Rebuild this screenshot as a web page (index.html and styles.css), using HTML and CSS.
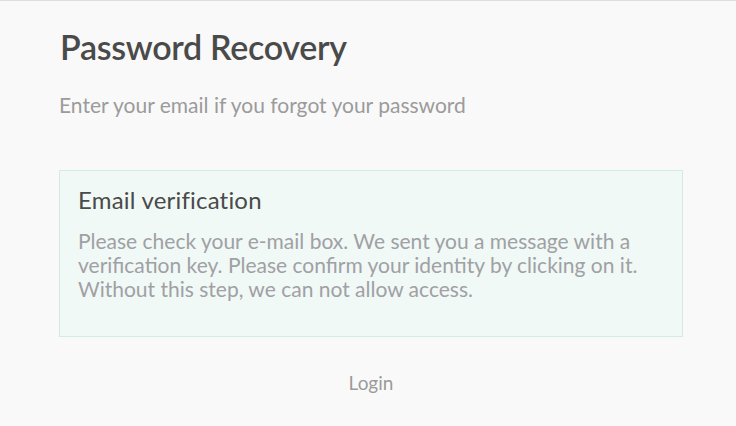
FILE: index.html
```html
<!DOCTYPE html>
<html lang="en">
<head>
    <meta charset="UTF-8">
    <meta name="viewport" content="width=device-width, initial-scale=1.0">
    <title>Password Recovery</title>

    <link rel="stylesheet" href="styles.css">
</head>
<body>
    <div class="container">
        <h1>Password Recovery</h1>
        <p class="subtitle">Enter your email if you forgot your password</p>

        <!-- Verification notice -->
        <div class="notice">
            <h2>Email verification</h2>
            <p>Please check your e-mail box. We sent you a message with a verification key. Please confirm your identity by clicking on it. Without this step, we can not allow access.</p>
        </div>

        <div class="links">
            <a href="#">Login</a>
        </div>
    </div>
</body>
</html>
```

FILE: styles.css
```css
body {
    font-family: Lato, "Open Sans", sans-serif;
    margin: 0;
    padding: 0;
    background-color: #f9f9f9;
    border-top: 1px solid #dedede;
}

.container {
    width: 624px;
    margin: 0 auto 0 59px;
    padding-top: 26px;
}

h1 {
    font-size: 34px;
    font-weight: 600;
    color: #4a4a4a;
    margin: 0 0 0 1px;
    line-height: 40px;
    letter-spacing: -0.3px;
}

.subtitle {
    font-size: 21px;
    color: #9b9b9b;
    margin: 26px 0 0;
    line-height: 24px;
}

.notice {
    margin-top: 53px;
    background-color: #f0f9f5;
    border: 1px solid #d2ece1;
    padding: 14px 18px 35px;
}

.notice h2 {
    font-size: 24px;
    font-weight: 400;
    color: #4a4a4a;
    margin: 0;
    line-height: 30px;
    letter-spacing: 0.2px;
}

.notice p {
    font-size: 21px;
    color: #a0a0a5;
    margin: 14px 0 0;
    line-height: 24px;
}

.links {
    text-align: center;
    margin-top: 34px;
}

.links a {
    font-size: 19px;
    color: #9b9b9b;
    text-decoration: none;
}
```
